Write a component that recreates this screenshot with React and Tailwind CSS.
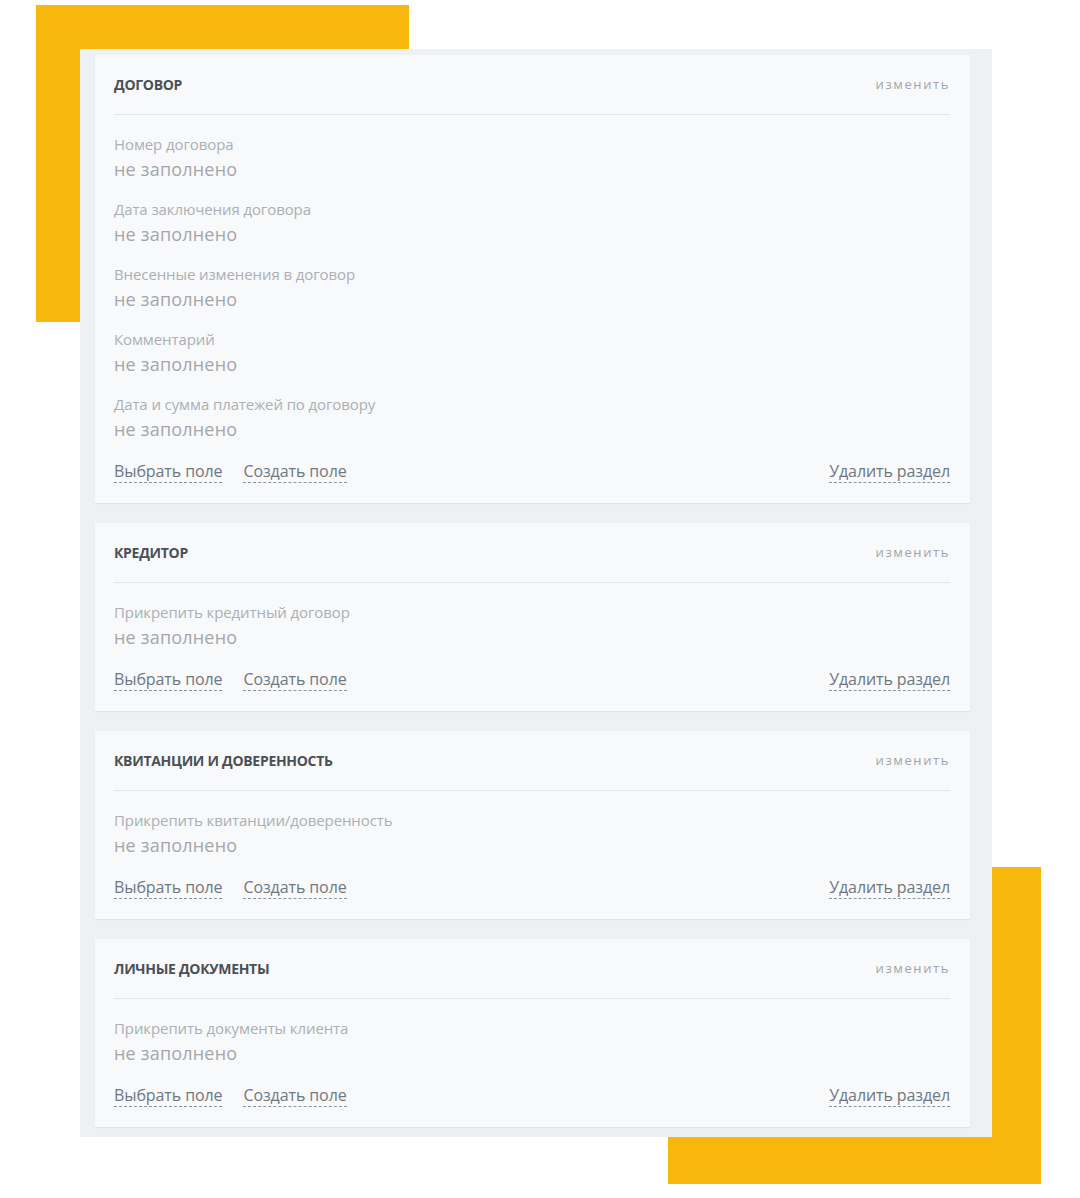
import React from "react";

const sections = [
  {
    title: "ДОГОВОР",
    fields: [
      "Номер договора",
      "Дата заключения договора",
      "Внесенные изменения в договор",
      "Комментарий",
      "Дата и сумма платежей по договору",
    ],
  },
  { title: "КРЕДИТОР", fields: ["Прикрепить кредитный договор"] },
  { title: "КВИТАНЦИИ И ДОВЕРЕННОСТЬ", fields: ["Прикрепить квитанции/доверенность"] },
  { title: "ЛИЧНЫЕ ДОКУМЕНТЫ", fields: ["Прикрепить документы клиента"] },
];

function DashLink({ children }) {
  return (
    <span className="text-[16px] leading-[22px] text-[#6e7882] border-b border-dashed border-[#8c949c] cursor-pointer tracking-[-0.1px]">
      {children}
    </span>
  );
}

function Card({ title, fields, last }) {
  return (
    <div className={`bg-[#f8f9fa] pl-[19px] pr-[20px] ${last ? "pb-[20px]" : "pb-[20px]"} shadow-[0_1px_1px_rgba(0,0,0,0.05)]`}>
      <div className="h-[60px] flex items-center justify-between border-b border-[#e4e7ea]">
        <span className="text-[14px] font-bold text-[#4a5056] tracking-[-0.3px]">{title}</span>
        <span className="text-[13px] text-[#a2a6aa] tracking-[1.6px]">изменить</span>
      </div>
      <div className="pt-[19px] flex flex-col gap-[15px]">
        {fields.map((f) => (
          <div key={f} className="flex flex-col">
            <span className="text-[15px] leading-[20px] text-[#abb0b5] tracking-[-0.1px]">{f}</span>
            <span className="text-[18px] leading-[30px] text-[#a3a7ab] tracking-[0.2px]">не заполнено</span>
          </div>
        ))}
      </div>
      <div className="mt-[16px] flex items-start justify-between">
        <div className="flex gap-[21px]">
          <DashLink>Выбрать поле</DashLink>
          <DashLink>Создать поле</DashLink>
        </div>
        <DashLink>Удалить раздел</DashLink>
      </div>
    </div>
  );
}

export default function App() {
  return (
    <div
      className="relative w-[1080px] h-[1198px] bg-white overflow-hidden"
      style={{ fontFamily: '"Open Sans", "Noto Sans", sans-serif' }}
    >
      <div className="absolute left-[36px] top-[5px] w-[373px] h-[317px] bg-[#f7b70d]" />
      <div className="absolute left-[668px] top-[867px] w-[373px] h-[317px] bg-[#f7b70d]" />
      <div className="relative ml-[80px] top-[49px] w-[912px] bg-[#eef1f4] pt-[6px] pl-[15px] pr-[22px] pb-[10px] flex flex-col gap-[20px]">
        {sections.map((s, i) => (
          <Card key={s.title} {...s} last={i === sections.length - 1} />
        ))}
      </div>
    </div>
  );
}
